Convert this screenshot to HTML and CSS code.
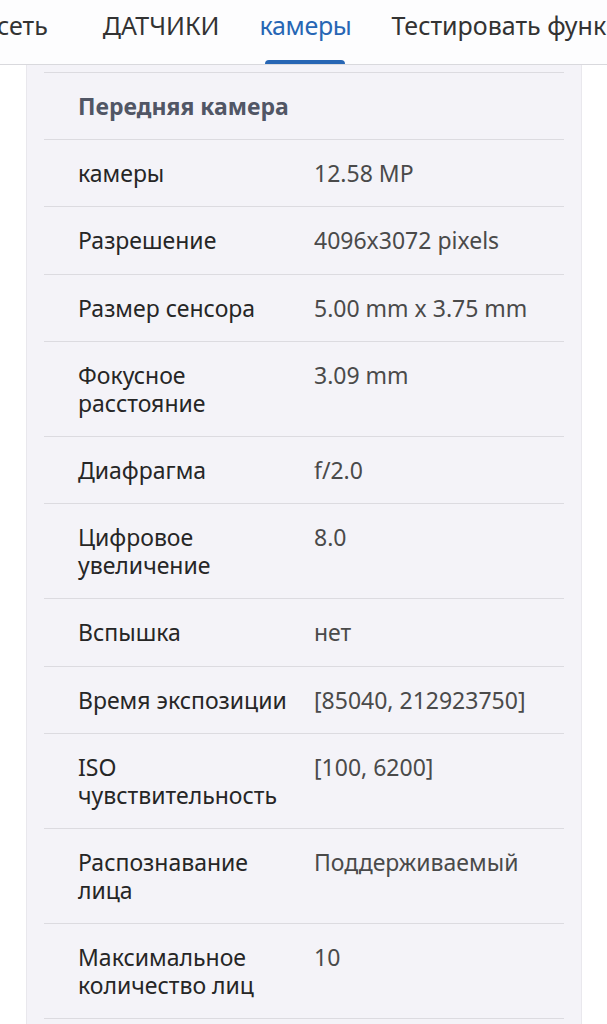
FILE: index.html
```html
<!DOCTYPE html>
<html lang="ru">
<head>
    <meta charset="UTF-8">
    <meta name="viewport" content="width=device-width, initial-scale=1.0">
    <title>Камеры</title>
    <link rel="stylesheet" href="styles.css">
</head>
<body>
    <div class="tabs">
        <div class="tabs-track">
            <div class="tab first">сеть</div>
            <div class="tab">ДАТЧИКИ</div>
            <div class="tab active">камеры</div>
            <div class="tab">Тестировать функции</div>
        </div>
    </div>

    <div class="card">
        <div class="row header">Передняя камера</div>
        <div class="row">
            <div class="label">камеры</div>
            <div class="value">12.58 MP</div>
        </div>
        <div class="row">
            <div class="label">Разрешение</div>
            <div class="value">4096x3072 pixels</div>
        </div>
        <div class="row">
            <div class="label">Размер сенсора</div>
            <div class="value">5.00 mm x 3.75 mm</div>
        </div>
        <div class="row">
            <div class="label">Фокусное расстояние</div>
            <div class="value">3.09 mm</div>
        </div>
        <div class="row">
            <div class="label">Диафрагма</div>
            <div class="value">f/2.0</div>
        </div>
        <div class="row">
            <div class="label">Цифровое увеличение</div>
            <div class="value">8.0</div>
        </div>
        <div class="row">
            <div class="label">Вспышка</div>
            <div class="value">нет</div>
        </div>
        <div class="row">
            <div class="label">Время экспозиции</div>
            <div class="value">[85040, 212923750]</div>
        </div>
        <div class="row">
            <div class="label">ISO чувствительность</div>
            <div class="value">[100, 6200]</div>
        </div>
        <div class="row">
            <div class="label">Распознавание лица</div>
            <div class="value">Поддерживаемый</div>
        </div>
        <div class="row">
            <div class="label">Максимальное количество лиц</div>
            <div class="value">10</div>
        </div>
    </div>
</body>
</html>
```

FILE: styles.css
```css
body {
    font-family: "Noto Sans", Roboto, sans-serif;
    margin: 0;
    background-color: #ffffff;
    color: #262626;
}
.tabs {
    height: 64px;
    border-bottom: 1px solid #d9d9dd;
    overflow: hidden;
    background-color: #fdfdfe;
}
.tabs-track {
    display: flex;
    white-space: nowrap;
}
.tab {
    position: relative;
    padding: 0 20px;
    height: 64px;
    line-height: 50px;
    font-size: 25px;
    color: #333333;
}
.tab.first {
    padding-left: 0;
    padding-right: 35px;
    margin-left: -3px;
}
.tab.active {
    color: #2766b4;
    letter-spacing: -0.3px;
}
.tab.active::after {
    content: "";
    position: absolute;
    left: 50%;
    bottom: -1px;
    width: 80px;
    height: 5px;
    margin-left: -40px;
    border-radius: 4px 4px 0 0;
    background-color: #2766b4;
}
.card {
    margin: 0 25px 0 26px;
    padding: 7px 17px 20px;
    background-color: #f4f3f8;
    border: 1px solid #e9e8ed;
    border-top: none;
}
.row {
    display: flex;
    gap: 14px;
    padding: 19px 0 19.2px 34px;
    border-top: 1px solid #dcdbe0;
    font-size: 23px;
    line-height: 28px;
}
.row:last-child {
    border-bottom: 1px solid #dcdbe0;
}
.header {
    font-weight: bold;
    color: #515665;
}
.label {
    width: 222px;
    flex-shrink: 0;
}
.value {
    color: #4a4a4a;
}
```
